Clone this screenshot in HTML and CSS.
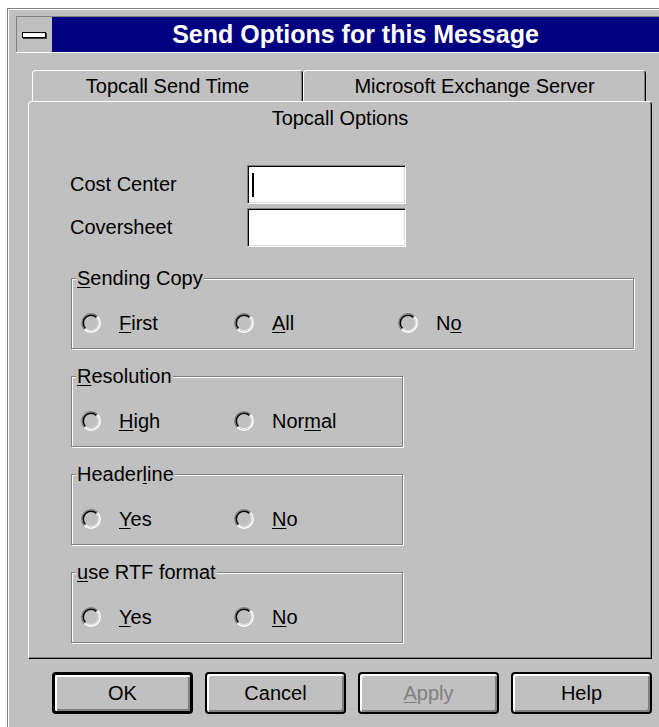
FILE: index.html
```html
<!DOCTYPE html>
<html lang="en">
<head>
<meta charset="utf-8">
<title>Send Options for this Message</title>
<link rel="stylesheet" href="styles.css">
</head>
<body>
<div class="window">
  <div class="titlebar">
    <div class="sysmenu"><span class="sysbar"></span></div>
    <div class="caption">Send Options for this Message</div>
  </div>
  <div class="client">
    <div class="tabs">
      <div class="tabrow">
        <div class="tab">Topcall Send Time</div>
        <div class="tab tab-wide">Microsoft Exchange Server</div>
      </div>
      <div class="panel">
        <div class="panel-title">Topcall Options</div>

        <div class="fields">
          <div class="field-row">
            <span class="field-label">Cost Center</span>
            <span class="textbox"><span class="caret"></span></span>
          </div>
          <div class="field-row">
            <span class="field-label">Coversheet</span>
            <span class="textbox"></span>
          </div>
        </div>

        <fieldset class="group group-wide group-first">
          <legend><u>S</u>ending Copy</legend>
          <div class="radios">
            <span class="option"><svg class="radio" viewBox="0 0 22 22"><use href="#radio"/></svg><span><u>F</u>irst</span></span>
            <span class="option option-mid"><svg class="radio" viewBox="0 0 22 22"><use href="#radio"/></svg><span><u>A</u>ll</span></span>
            <span class="option"><svg class="radio" viewBox="0 0 22 22"><use href="#radio"/></svg><span>N<u>o</u></span></span>
          </div>
        </fieldset>

        <fieldset class="group">
          <legend><u>R</u>esolution</legend>
          <div class="radios">
            <span class="option"><svg class="radio" viewBox="0 0 22 22"><use href="#radio"/></svg><span><u>H</u>igh</span></span>
            <span class="option"><svg class="radio" viewBox="0 0 22 22"><use href="#radio"/></svg><span>Nor<u>m</u>al</span></span>
          </div>
        </fieldset>

        <fieldset class="group">
          <legend>Header<u>l</u>ine</legend>
          <div class="radios">
            <span class="option"><svg class="radio" viewBox="0 0 22 22"><use href="#radio"/></svg><span><u>Y</u>es</span></span>
            <span class="option"><svg class="radio" viewBox="0 0 22 22"><use href="#radio"/></svg><span><u>N</u>o</span></span>
          </div>
        </fieldset>

        <fieldset class="group">
          <legend><u>u</u>se RTF format</legend>
          <div class="radios">
            <span class="option"><svg class="radio" viewBox="0 0 22 22"><use href="#radio"/></svg><span><u>Y</u>es</span></span>
            <span class="option"><svg class="radio" viewBox="0 0 22 22"><use href="#radio"/></svg><span><u>N</u>o</span></span>
          </div>
        </fieldset>
      </div>
    </div>

    <div class="buttons">
      <button class="btn btn-default" type="button">OK</button>
      <button class="btn" type="button">Cancel</button>
      <button class="btn btn-disabled" type="button"><span><u>A</u>pply</span></button>
      <button class="btn" type="button">Help</button>
    </div>
  </div>
</div>

<!-- shared radio-button glyph: dark arcs upper-left, light arcs lower-right -->
<svg class="defs" width="0" height="0" aria-hidden="true">
  <defs>
    <g id="radio" fill="none" stroke-width="1.5">
      <path d="M17.54 4.46 A9.25 9.25 0 0 0 4.46 17.54" stroke="#808080"/>
      <path d="M4.46 17.54 A9.25 9.25 0 0 0 17.54 4.46" stroke="#ffffff"/>
      <path d="M16.48 5.52 A7.75 7.75 0 0 0 5.52 16.48" stroke="#000000"/>
      <path d="M5.52 16.48 A7.75 7.75 0 0 0 16.48 5.52" stroke="#dfdfdf"/>
    </g>
  </defs>
</svg>
</body>
</html>
```

FILE: styles.css
```css
html, body {
  margin: 0;
  background: #ffffff;
  overflow: hidden;
}

body {
  font-family: "Liberation Sans", Arial, sans-serif;
  font-size: 20px;
  color: #000000;
}

u {
  text-decoration-thickness: 1px;
  text-underline-offset: 2px;
}

.defs {
  position: absolute;
  width: 0;
  height: 0;
}

/* ---- window frame ---- */
.window {
  box-sizing: border-box;
  width: 652px;
  height: 740px;
  margin: 8px 0 0 7px;
  padding: 7px 0 0 8px;
  background: #c0c0c0;
  border-top: 1px solid #808080;
  border-left: 1px solid #808080;
  box-shadow: inset 1px 1px 0 #ffffff;
}

.titlebar {
  display: flex;
  box-sizing: border-box;
  height: 36px;
  border-top: 1px solid #808080;
  border-left: 1px solid #808080;
}

.sysmenu {
  width: 35px;
  display: flex;
  align-items: center;
  justify-content: center;
  background: #c0c0c0;
}

.sysbar {
  box-sizing: border-box;
  width: 24px;
  height: 6px;
  margin: 0 1px 0 0;
  background: #ffffff;
  border: 1px solid #000000;
  box-shadow: 1px 1px 0 #404040;
}

.caption {
  flex: 1;
  background: #000080;
  color: #ffffff;
  font-weight: bold;
  font-size: 25px;
  line-height: 35px;
  text-align: center;
}

.client {
  border-top: 1px solid #ffffff;
  padding: 17px 0 0 12px;
}

/* ---- tab control ---- */
.tabs {
  width: 624px;
}

.tabrow {
  display: flex;
  height: 31px;
  padding-left: 4px;
}

.tab {
  box-sizing: border-box;
  width: 271px;
  height: 31px;
  border-top: 1px solid #ffffff;
  border-left: 1px solid #ffffff;
  border-right: 1px solid #000000;
  border-radius: 4px 4px 0 0;
  box-shadow: inset -1px 0 0 #808080;
  text-align: center;
  line-height: 30px;
}

.tab-wide {
  width: 343px;
}

.panel {
  box-sizing: border-box;
  height: 558px;
  border: 1px solid;
  border-color: #ffffff #000000 #000000 #ffffff;
  border-radius: 4px 4px 0 0;
  box-shadow: inset -1px -1px 0 #808080;
}

.panel-title {
  margin-top: 5px;
  line-height: 23px;
  text-align: center;
}

/* ---- edit fields ---- */
.fields {
  display: flex;
  flex-direction: column;
  gap: 4px;
  margin: 35px 0 0 41px;
}

.field-row {
  display: flex;
  align-items: center;
}

.field-label {
  width: 177px;
}

.textbox {
  box-sizing: border-box;
  display: flex;
  align-items: center;
  width: 159px;
  height: 39px;
  background: #ffffff;
  border: 1px solid;
  border-color: #808080 #ffffff #ffffff #808080;
  box-shadow: inset 1px 1px 0 #000000, inset -1px -1px 0 #dfdfdf;
}

.caret {
  width: 2px;
  height: 24px;
  margin-left: 4px;
  background: #000000;
}

/* ---- group boxes ---- */
.group {
  box-sizing: border-box;
  width: 332px;
  min-width: 0;
  margin: 16px 0 0 42px;
  padding: 8px 0 0 8px;
  border: 1px solid #808080;
  box-shadow: inset 1px 1px 0 #ffffff, 1px 1px 0 #ffffff;
}

.group-first {
  margin-top: 20px;
}

.group-wide {
  width: 563px;
}

.group legend {
  margin-left: -4px;
  padding: 0 1px;
  line-height: 23px;
  background: #c0c0c0;
}

.radios {
  display: flex;
  align-items: center;
  height: 50px;
}

.option {
  display: flex;
  align-items: center;
  width: 153px;
}

.option-mid {
  width: 164px;
}

.radio {
  width: 22px;
  height: 22px;
  margin-right: 17px;
  flex: none;
}

/* ---- push buttons ---- */
.buttons {
  display: flex;
  gap: 12px;
  margin: 13px 0 0 24px;
}

.btn {
  box-sizing: border-box;
  width: 141px;
  height: 42px;
  padding: 0;
  font: inherit;
  color: #000000;
  background: #c0c0c0;
  border: 2px solid #000000;
  border-radius: 4px;
  box-shadow: inset 2px 2px 0 #ffffff, inset -2px -2px 0 #808080;
  display: flex;
  align-items: center;
  justify-content: center;
}

.btn-default {
  border-width: 3px;
}

.btn-disabled {
  color: #808080;
}
```
